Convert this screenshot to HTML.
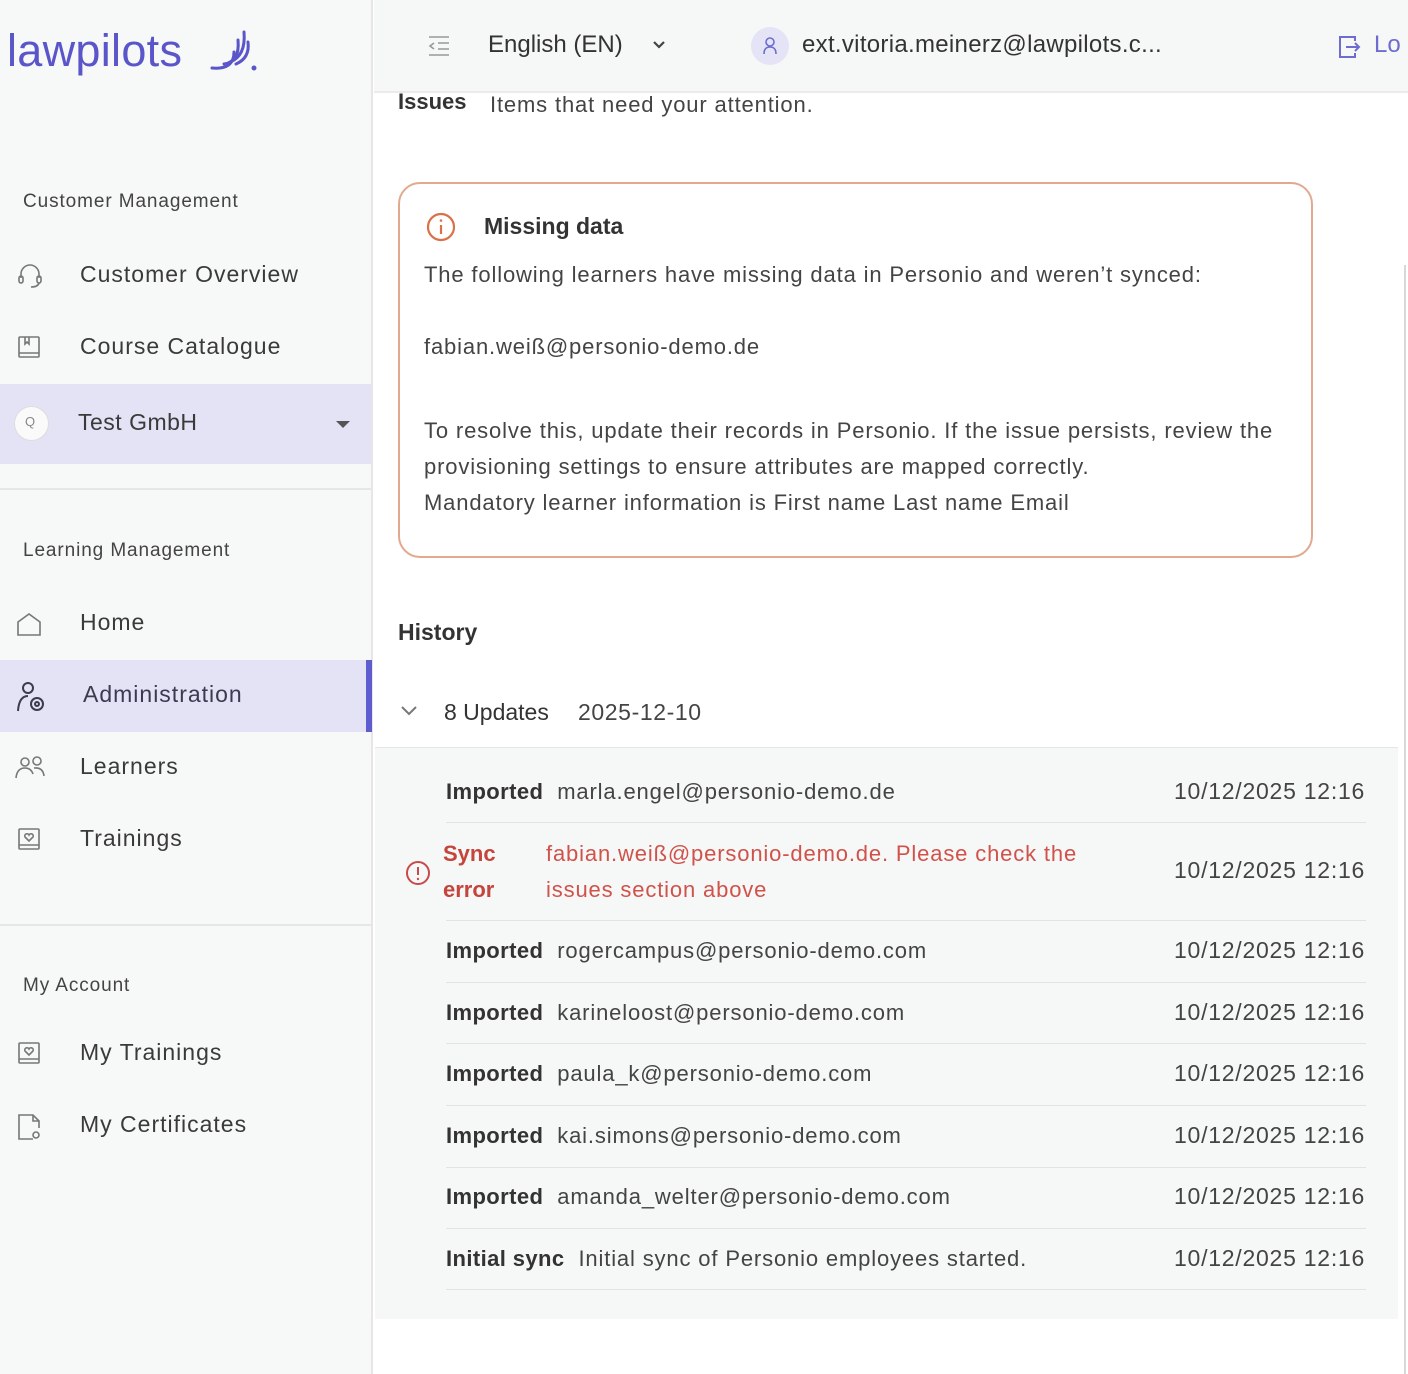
<!DOCTYPE html>
<html><head><meta charset="utf-8"><style>
*{margin:0;padding:0;box-sizing:border-box}
body{width:1408px;height:1374px;position:relative;overflow:hidden;background:#fff;font-family:"Liberation Sans","DejaVu Sans",sans-serif;color:#333}
.a{position:absolute;white-space:nowrap}
#side{position:absolute;left:0;top:0;width:373px;height:1374px;background:#f7f8f8;border-right:2px solid #e6e6e8}
.sec{font-size:19px;color:#444;letter-spacing:0.9px}
.nav{font-size:23px;color:#3a3a3a;letter-spacing:1px}
.ic{position:absolute}
#hdr{position:absolute;left:374px;top:0;width:1034px;height:93px;background:#f6f7f7;border-bottom:2px solid #ebebeb}
.m{font-size:22px;color:#444;letter-spacing:0.85px}
.b{font-weight:bold;color:#333;letter-spacing:0.4px}
.ts{position:absolute;left:1174px;font-size:23px;color:#444;letter-spacing:0.75px}
.sep{position:absolute;left:446px;width:920px;height:1px;background:#e3e3e3}
</style></head><body>
<div id="side">
 <div class="a" style="left:7px;top:25px;font-size:45px;color:#5a55c9;letter-spacing:0.3px">lawpilots</div>
 <svg class="ic" style="left:208px;top:28px" width="50" height="46" viewBox="0 0 50 46" fill="none" stroke="#5a55c9" stroke-width="3" stroke-linecap="round"><path d="M4 40 Q26 42 26 24"/><path d="M16 36 Q32 34 30 12"/><path d="M22 34 Q38 28 36 4"/><path d="M28 36 Q42 30 40 14"/><circle cx="46" cy="40" r="2.5" fill="#5a55c9" stroke="none"/></svg>
 <div class="a sec" style="left:23px;top:191px">Customer Management</div>
 <svg class="ic" style="left:16px;top:262px" width="28" height="28" viewBox="0 0 28 28" fill="none" stroke="#777" stroke-width="1.6"><path d="M5 16 V12 a9 9 0 0 1 18 0 V16"/><rect x="3" y="14" width="4" height="7" rx="2"/><rect x="21" y="14" width="4" height="7" rx="2"/><path d="M23 21 Q22 25 15 25"/></svg>
 <div class="a nav" style="left:80px;top:261px">Customer Overview</div>
 <svg class="ic" style="left:16px;top:334px" width="26" height="26" viewBox="0 0 26 26" fill="none" stroke="#777" stroke-width="1.6"><rect x="3" y="3" width="20" height="20" rx="1"/><path d="M3 19 H23 M9 3 V10 L11 8 L13 10 V3"/></svg>
 <div class="a nav" style="left:80px;top:333px">Course Catalogue</div>
 <div style="position:absolute;left:0;top:384px;width:371px;height:80px;background:#e3e3f5"></div>
 <div style="position:absolute;left:14px;top:406px;width:35px;height:35px;border-radius:50%;background:#fafafa;border:1px solid #ddd"></div>
 <div class="a" style="left:25px;top:414px;font-size:13px;color:#888">Q</div>
 <div class="a nav" style="left:78px;top:409px;letter-spacing:0.5px">Test GmbH</div>
 <div class="a" style="left:336px;top:421px;width:0;height:0;border-left:7px solid transparent;border-right:7px solid transparent;border-top:7px solid #555"></div>
 <div style="position:absolute;left:0;top:488px;width:371px;height:2px;background:#e6e6e8"></div>
 <div class="a sec" style="left:23px;top:540px">Learning Management</div>
 <svg class="ic" style="left:15px;top:610px" width="28" height="28" viewBox="0 0 28 28" fill="none" stroke="#777" stroke-width="1.6"><path d="M3 12 L14 4 L25 12 V25 H3 Z"/></svg>
 <div class="a nav" style="left:80px;top:609px">Home</div>
 <div style="position:absolute;left:0;top:660px;width:371px;height:72px;background:#e3e3f5"></div>
 <div style="position:absolute;left:366px;top:660px;width:6px;height:72px;background:#5f5ccf"></div>
 <svg class="ic" style="left:15px;top:680px" width="34" height="34" viewBox="0 0 34 34" fill="none" stroke="#3b3b4e" stroke-width="2"><circle cx="13" cy="8" r="5"/><path d="M3 31 Q4 16 13 16"/><circle cx="22" cy="24" r="6"/><circle cx="22" cy="24" r="2"/></svg>
 <div class="a nav" style="left:83px;top:681px;color:#3b3b50">Administration</div>
 <svg class="ic" style="left:14px;top:754px" width="32" height="28" viewBox="0 0 32 28" fill="none" stroke="#777" stroke-width="1.6"><circle cx="11" cy="8" r="4"/><path d="M2 24 Q3 14 11 14 Q17 14 19 20"/><circle cx="23" cy="7" r="4"/><path d="M20 14 Q29 13 30 22"/></svg>
 <div class="a nav" style="left:80px;top:753px">Learners</div>
 <svg class="ic" style="left:16px;top:826px" width="26" height="26" viewBox="0 0 26 26" fill="none" stroke="#777" stroke-width="1.6"><rect x="3" y="3" width="20" height="20" rx="1"/><path d="M3 19 H23"/><path d="M13 15 L9 11 a2 2 0 0 1 4 -2 a2 2 0 0 1 4 2 Z"/></svg>
 <div class="a nav" style="left:80px;top:825px">Trainings</div>
 <div style="position:absolute;left:0;top:924px;width:371px;height:2px;background:#e6e6e8"></div>
 <div class="a sec" style="left:23px;top:975px">My Account</div>
 <svg class="ic" style="left:16px;top:1040px" width="26" height="26" viewBox="0 0 26 26" fill="none" stroke="#777" stroke-width="1.6"><rect x="3" y="3" width="20" height="20" rx="1"/><path d="M3 19 H23"/><path d="M13 15 L9 11 a2 2 0 0 1 4 -2 a2 2 0 0 1 4 2 Z"/></svg>
 <div class="a nav" style="left:80px;top:1039px">My Trainings</div>
 <svg class="ic" style="left:16px;top:1112px" width="28" height="30" viewBox="0 0 28 30" fill="none" stroke="#777" stroke-width="1.6"><path d="M17 27 H3 V3 H17 L23 9 V16"/><path d="M17 3 V9 H23"/><circle cx="20" cy="23" r="3"/></svg>
 <div class="a nav" style="left:80px;top:1111px">My Certificates</div>
</div>

<div id="hdr">
 <svg class="ic" style="left:52px;top:34px" width="26" height="24" viewBox="0 0 26 24" fill="none" stroke="#999" stroke-width="1.6"><path d="M3 3 H23 M12 9 H23 M12 15 H23 M3 21 H23 M8 9 L4 12 L8 15"/></svg>
 <div class="a" style="left:114px;top:31px;font-size:24px;color:#333">English (EN)</div>
 <svg class="ic" style="left:278px;top:40px" width="14" height="10" viewBox="0 0 14 10" fill="none" stroke="#444" stroke-width="2.2"><path d="M2 2 L7 7 L12 2"/></svg>
 <div style="position:absolute;left:377px;top:27px;width:38px;height:38px;border-radius:50%;background:#e4e4f6"></div>
 <svg class="ic" style="left:387px;top:36px" width="18" height="20" viewBox="0 0 18 20" fill="none" stroke="#6f6cd0" stroke-width="1.6"><circle cx="9" cy="6" r="4"/><path d="M3 18 Q3 11 9 11 Q15 11 15 18"/></svg>
 <div class="a" style="left:428px;top:31px;font-size:24px;color:#333;letter-spacing:0.3px">ext.vitoria.meinerz@lawpilots.c...</div>
 <svg class="ic" style="left:963px;top:34px" width="24" height="26" viewBox="0 0 24 26" fill="none" stroke="#6f6cd0" stroke-width="2"><path d="M18 7 V3 H3 V23 H18 V19"/><path d="M9 13 H22 M18 9 L22 13 L18 17"/></svg>
 <div class="a" style="left:1000px;top:31px;font-size:24px;color:#6f6cd0">Lo</div>
</div>
<div style="position:absolute;left:1404px;top:265px;width:2px;height:1109px;background:#d8d8d8"></div>

<div class="a" style="left:398px;top:89px;font-size:22px;font-weight:bold;color:#333">Issues</div>
<div class="a m" style="left:490px;top:92px">Items that need your attention.</div>

<div style="position:absolute;left:398px;top:182px;width:915px;height:376px;border:2px solid #e2a98f;border-radius:22px;background:#fff"></div>
<svg class="ic" style="left:425px;top:211px" width="32" height="32" viewBox="0 0 32 32" fill="none" stroke="#d9714a" stroke-width="2.2"><circle cx="16" cy="16" r="13"/><path d="M16 14 V23"/><circle cx="16" cy="9.5" r="1.3" fill="#d9714a" stroke="none"/></svg>
<div class="a" style="left:484px;top:213px;font-size:23px;font-weight:bold;color:#333">Missing data</div>
<div class="a m" style="left:424px;top:262px">The following learners have missing data in Personio and weren’t synced:</div>
<div class="a m" style="left:424px;top:334px">fabian.weiß@personio-demo.de</div>
<div class="a m" style="left:424px;top:418px">To resolve this, update their records in Personio. If the issue persists, review the</div>
<div class="a m" style="left:424px;top:454px">provisioning settings to ensure attributes are mapped correctly.</div>
<div class="a m" style="left:424px;top:490px">Mandatory learner information is First name Last name Email</div>

<div class="a" style="left:398px;top:619px;font-size:23px;font-weight:bold;color:#333">History</div>
<svg class="ic" style="left:400px;top:705px" width="18" height="12" viewBox="0 0 18 12" fill="none" stroke="#777" stroke-width="2"><path d="M2 2 L9 9 L16 2"/></svg>
<div class="a" style="left:444px;top:699px;font-size:23px;color:#333">8 Updates</div>
<div class="a" style="left:578px;top:699px;font-size:23px;color:#444;letter-spacing:0.6px">2025-12-10</div>
<div style="position:absolute;left:375px;top:747px;width:1023px;height:1px;background:#e6e6e6"></div>
<div style="position:absolute;left:375px;top:748px;width:1023px;height:571px;background:#f6f7f7"></div>

<div class="a m" style="left:446px;top:779px"><span class="b">Imported</span>&nbsp; marla.engel@personio-demo.de</div>
<div class="ts" style="top:778px">10/12/2025 12:16</div>
<div class="sep" style="top:822px"></div>
<svg class="ic" style="left:404px;top:859px" width="28" height="28" viewBox="0 0 28 28" fill="none" stroke="#c94a4a" stroke-width="2"><circle cx="14" cy="14" r="11"/><path d="M14 8 V16"/><circle cx="14" cy="20" r="1.2" fill="#c94a4a" stroke="none"/></svg>
<div class="a" style="left:443px;top:836px;font-size:22px;font-weight:bold;color:#c4453b;line-height:36px">Sync<br>error</div>
<div class="a" style="left:546px;top:836px;font-size:22px;color:#d0524a;line-height:36px;letter-spacing:0.85px">fabian.weiß@personio-demo.de. Please check the<br>issues section above</div>
<div class="ts" style="top:857px">10/12/2025 12:16</div>
<div class="sep" style="top:920px"></div>
<div class="a m" style="left:446px;top:938px"><span class="b">Imported</span>&nbsp; rogercampus@personio-demo.com</div>
<div class="ts" style="top:937px">10/12/2025 12:16</div>
<div class="sep" style="top:982px"></div>
<div class="a m" style="left:446px;top:1000px"><span class="b">Imported</span>&nbsp; karineloost@personio-demo.com</div>
<div class="ts" style="top:999px">10/12/2025 12:16</div>
<div class="sep" style="top:1043px"></div>
<div class="a m" style="left:446px;top:1061px"><span class="b">Imported</span>&nbsp; paula_k@personio-demo.com</div>
<div class="ts" style="top:1060px">10/12/2025 12:16</div>
<div class="sep" style="top:1105px"></div>
<div class="a m" style="left:446px;top:1123px"><span class="b">Imported</span>&nbsp; kai.simons@personio-demo.com</div>
<div class="ts" style="top:1122px">10/12/2025 12:16</div>
<div class="sep" style="top:1167px"></div>
<div class="a m" style="left:446px;top:1184px"><span class="b">Imported</span>&nbsp; amanda_welter@personio-demo.com</div>
<div class="ts" style="top:1183px">10/12/2025 12:16</div>
<div class="sep" style="top:1228px"></div>
<div class="a m" style="left:446px;top:1246px"><span class="b">Initial sync</span>&nbsp; Initial sync of Personio employees started.</div>
<div class="ts" style="top:1245px">10/12/2025 12:16</div>
<div class="sep" style="top:1289px"></div>
</body></html>
